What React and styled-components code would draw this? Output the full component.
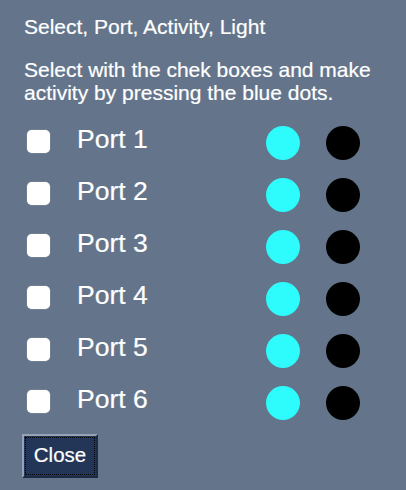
import React, { useState } from 'react';
import styled, { createGlobalStyle } from 'styled-components';

const GlobalStyle = createGlobalStyle`
  html, body {
    margin: 0;
    padding: 0;
    background: #64758b;
  }
  body {
    font-family: "Liberation Sans", Arial, Helvetica, sans-serif;
    color: #fff;
  }
`;

const Panel = styled.div`
  width: 406px;
  height: 490px;
  box-sizing: border-box;
  padding: 15px 24px 0 22px;
  background: #64758b;
  display: flex;
  flex-direction: column;
`;

const Title = styled.div`
  font-size: 21px;
  line-height: 23px;
  padding-left: 2px;
  -webkit-text-stroke: 0.2px #fff;
`;

const Hint = styled(Title)`
  margin-top: 20px;
`;

const List = styled.div`
  margin-top: 13px;
  display: flex;
  flex-direction: column;
`;

const Row = styled.div`
  height: 52px;
  display: flex;
  align-items: center;
`;

const Check = styled.input.attrs({ type: 'checkbox' })`
  appearance: none;
  margin: 0 0 3px 5px;
  width: 23px;
  height: 23px;
  border-radius: 5px;
  background: #fff;
  box-shadow: 0 0 1px rgba(255, 255, 255, 0.8);
  cursor: pointer;
  flex: none;
  &:checked {
    background: #2d7df6;
  }
`;

const Label = styled.span`
  margin-left: 27px;
  margin-bottom: 7px;
  font-size: 26.5px;
  width: 189px;
  -webkit-text-stroke: 0.2px #fff;
`;

const Dot = styled.button`
  width: 34px;
  height: 34px;
  border-radius: 50%;
  border: none;
  padding: 0;
  flex: none;
  background: ${p => (p.lit ? '#2efbfb' : '#000')};
  margin-left: ${p => (p.lit ? '0' : '26px')};
  cursor: pointer;
`;

const CloseButton = styled.button`
  margin-top: 5px;
  align-self: flex-start;
  width: 76px;
  height: 44px;
  box-sizing: border-box;
  background: #233658;
  color: #fff;
  font-family: "Liberation Sans", Arial, sans-serif;
  font-size: 20.5px;
  -webkit-text-stroke: 0.2px #fff;
  border: 2px solid;
  border-color: #97a2b2 #1c2a44 #1c2a44 #97a2b2;
  outline: 1px dotted #000;
  outline-offset: -4px;
  padding: 0 0 2px 0;
`;

const ports = [1, 2, 3, 4, 5, 6];

export default function App() {
  const [lit, setLit] = useState({});
  return (
    <>
      <GlobalStyle />
      <Panel>
        <Title>Select, Port, Activity, Light</Title>
        <Hint>
          Select with the chek boxes and make
          <br />
          activity by pressing the blue dots.
        </Hint>
        <List>
          {ports.map(n => (
            <Row key={n}>
              <Check />
              <Label>Port {n}</Label>
              <Dot lit onClick={() => setLit({ ...lit, [n]: !lit[n] })} />
              <Dot style={lit[n] ? { background: '#ffeb3b' } : undefined} />
            </Row>
          ))}
        </List>
        <CloseButton>Close</CloseButton>
      </Panel>
    </>
  );
}
